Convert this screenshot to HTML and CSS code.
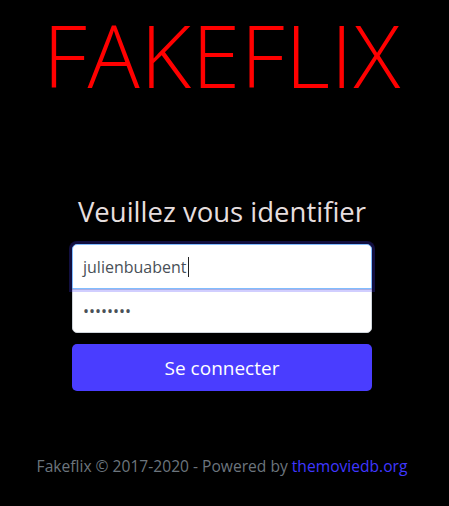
FILE: index.html
```html
<!DOCTYPE html>
<html lang="fr">
<head>
<meta charset="utf-8">
<title>Fakeflix</title>
<link rel="stylesheet" href="styles.css">
</head>
<body>
<div class="page">
  <h1 class="logo">FAKEFLIX</h1>
  <form class="signin">
    <h2 class="signin-title">Veuillez vous identifier</h2>
    <div class="field field-top is-focused"><span class="value">julienbuabent</span><span class="caret"></span></div>
    <div class="field field-bottom"><span class="value dots">••••••••</span></div>
    <button type="button" class="btn">Se connecter</button>
  </form>
  <p class="footer">Fakeflix © 2017-2020 - Powered by <a href="#" class="link">themoviedb.org</a></p>
</div>
</body>
</html>
```

FILE: styles.css
```css
html, body {
  margin: 0;
  padding: 0;
  background: #000;
}
.page {
  font-family: "Open Sans", "Noto Sans", sans-serif;
  display: flex;
  flex-direction: column;
  align-items: center;
  height: 506px;
  padding-right: 5px;
}
.logo {
  margin: 0;
  padding-top: 0;
  font-size: 87px;
  line-height: 108px;
  font-weight: 350;
  color: #ff0000;
  letter-spacing: 0.8px;
}
.signin {
  width: 300px;
  margin-top: 88px;
  display: flex;
  flex-direction: column;
}
.signin-title {
  margin: 0 0 16px;
  text-align: center;
  font-size: 27.5px;
  line-height: 32px;
  font-weight: 400;
  color: #e6dede;
  white-space: nowrap;
}
.field {
  box-sizing: border-box;
  height: 45px;
  background: #fff;
  border: 1px solid #ced4da;
  padding: 0 10px;
  display: flex;
  align-items: center;
  font-size: 16px;
  color: #495057;
  position: relative;
}
.field-top {
  border-radius: 5px 5px 0 0;
  z-index: 2;
}
.field-bottom {
  border-radius: 0 0 5px 5px;
  height: 44px;
}
.is-focused {
  border-color: #80bdff;
  box-shadow: 0 0 0 3px rgba(72, 61, 255, 0.25);
}
.caret {
  display: inline-block;
  width: 1px;
  height: 20px;
  background: #222;
  margin-left: 1px;
}
.dots {
  letter-spacing: 0;
  font-size: 16px;
}
.btn {
  margin-top: 11px;
  height: 47px;
  border: 0;
  border-radius: 5px;
  background: #4a3dff;
  color: #fff;
  font-family: inherit;
  font-size: 19px;
}
.footer {
  margin: 64px 0 0;
  font-size: 15.6px;
  color: #6c757d;
  white-space: nowrap;
}
.link {
  color: #3f37ff;
  text-decoration: none;
}
```
